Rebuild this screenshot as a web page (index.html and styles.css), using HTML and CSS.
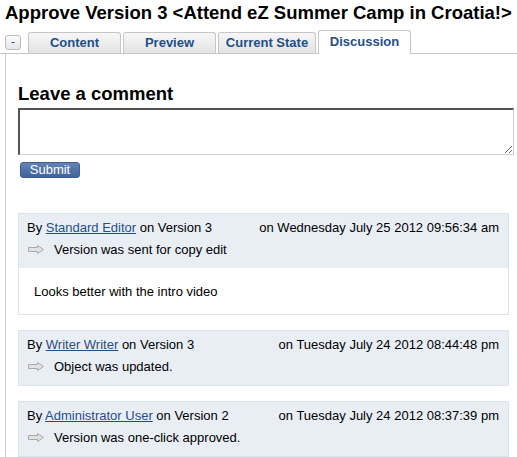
FILE: index.html
```html
<!DOCTYPE html>
<html>
<head>
<meta charset="utf-8">
<link rel="stylesheet" href="styles.css">
</head>
<body>
<h1 class="title">Approve Version 3 &lt;Attend eZ Summer Camp in Croatia!&gt;</h1>
<div class="tabbar">
  <span class="toggle">-</span>
  <span class="tab">Content</span>
  <span class="tab">Preview</span>
  <span class="tab tab-wide">Current State</span>
  <span class="tab active">Discussion</span>
</div>
<div class="panel">
  <h2 class="heading">Leave a comment</h2>
  <textarea class="comment-input"></textarea>
  <button class="submit">Submit</button>

  <div class="entries">
    <div class="entry">
      <div class="entry-head">
        <div class="meta"><span>By <a href="#">Standard Editor</a> on Version 3</span><span>on Wednesday July 25 2012 09:56:34 am</span></div>
        <div class="action"><svg class="arrow" width="16" height="9" viewBox="0 0 16 9"><path d="M0.5 2.5 H9.5 V0.5 L15.5 4.5 L9.5 8.5 V6.5 H0.5 Z" fill="#e2e2e2" stroke="#a8a8a8" stroke-width="1"/></svg><span>Version was sent for copy edit</span></div>
      </div>
      <div class="entry-body">Looks better with the intro video</div>
    </div>
    <div class="entry">
      <div class="entry-head">
        <div class="meta"><span>By <a href="#">Writer Writer</a> on Version 3</span><span>on Tuesday July 24 2012 08:44:48 pm</span></div>
        <div class="action"><svg class="arrow" width="16" height="9" viewBox="0 0 16 9"><path d="M0.5 2.5 H9.5 V0.5 L15.5 4.5 L9.5 8.5 V6.5 H0.5 Z" fill="#e2e2e2" stroke="#a8a8a8" stroke-width="1"/></svg><span>Object was updated.</span></div>
      </div>
    </div>
    <div class="entry">
      <div class="entry-head">
        <div class="meta"><span>By <a href="#">Administrator User</a> on Version 2</span><span>on Tuesday July 24 2012 08:37:39 pm</span></div>
        <div class="action"><svg class="arrow" width="16" height="9" viewBox="0 0 16 9"><path d="M0.5 2.5 H9.5 V0.5 L15.5 4.5 L9.5 8.5 V6.5 H0.5 Z" fill="#e2e2e2" stroke="#a8a8a8" stroke-width="1"/></svg><span>Version was one-click approved.</span></div>
      </div>
    </div>
  </div>
</div>
</body>
</html>
```

FILE: styles.css
```css
html, body {
  margin: 0;
  padding: 0;
  background: #fff;
}
body {
  font-family: "Liberation Sans", Arial, sans-serif;
  font-size: 13px;
  color: #000;
}
.title {
  margin: 0;
  padding: 2px 0 0 5px;
  font-size: 18.5px;
  line-height: 22px;
  font-weight: bold;
  white-space: nowrap;
}
.tabbar {
  display: flex;
  align-items: flex-end;
  height: 23px;
  margin-top: 6px;
  padding-left: 5px;
  border-bottom: 1px solid #c6c6c6;
}
.toggle {
  box-sizing: border-box;
  width: 16px;
  height: 15px;
  margin: 0 7px 3px 0;
  border: 1px solid #bdbdbd;
  border-radius: 3px;
  background: linear-gradient(#fafafa, #e6e6e6);
  color: #1f4f8a;
  font-size: 12px;
  line-height: 12px;
  text-align: center;
}
.tab {
  box-sizing: border-box;
  width: 93px;
  height: 21px;
  margin-right: 2px;
  padding-top: 2px;
  border: 1px solid #c6c6c6;
  border-bottom: none;
  border-radius: 3px 3px 0 0;
  background: linear-gradient(#f7f7f7, #e3e3e3);
  color: #1f4f8a;
  font-weight: bold;
  font-size: 13px;
  line-height: 15px;
  text-align: center;
  white-space: nowrap;
}
.tab-wide {
  width: 98px;
}
.tab.active {
  height: 24px;
  margin-bottom: -1px;
  padding-top: 3px;
  background: #fff;
}
.panel {
  margin-left: 5px;
  padding: 29px 0 0 12px;
  border-left: 1px solid #cfcfcf;
  min-height: 500px;
}
.heading {
  margin: 0;
  font-size: 18.5px;
  line-height: 22px;
  font-weight: bold;
}
.comment-input {
  display: block;
  box-sizing: border-box;
  width: 496px;
  height: 47px;
  margin: 3px 0 0 0;
  padding: 0;
  border-style: solid;
  border-width: 2px 1px 1px 2px;
  border-color: #555 #d4d0c8 #d4d0c8 #555;
  background: #fff;
  resize: both;
}
.submit {
  display: block;
  box-sizing: border-box;
  width: 60px;
  height: 16px;
  margin: 7px 0 0 2px;
  padding: 0;
  border: 1px solid #3f5d8f;
  border-radius: 3px;
  background: linear-gradient(#6383b8, #41639b);
  color: #fff;
  font-family: "Liberation Sans", Arial, sans-serif;
  font-size: 13px;
  line-height: 14px;
}
.entries {
  margin-top: 35px;
}
.entry {
  box-sizing: border-box;
  width: 491px;
  margin-bottom: 15px;
  border: 1px solid #dce3ec;
}
.entry-head {
  padding: 6px 9px 11px 8px;
  background: #e9eef5;
}
.meta {
  display: flex;
  justify-content: space-between;
  line-height: 15px;
  white-space: nowrap;
}
.meta a {
  color: #1f4f8a;
  text-decoration: underline;
}
.action {
  display: flex;
  align-items: center;
  margin-top: 7px;
  line-height: 15px;
}
.arrow {
  display: block;
  margin: 0 10px 0 1px;
}
.entry-body {
  padding: 16px 15px 15px 15px;
  line-height: 15px;
}
```
